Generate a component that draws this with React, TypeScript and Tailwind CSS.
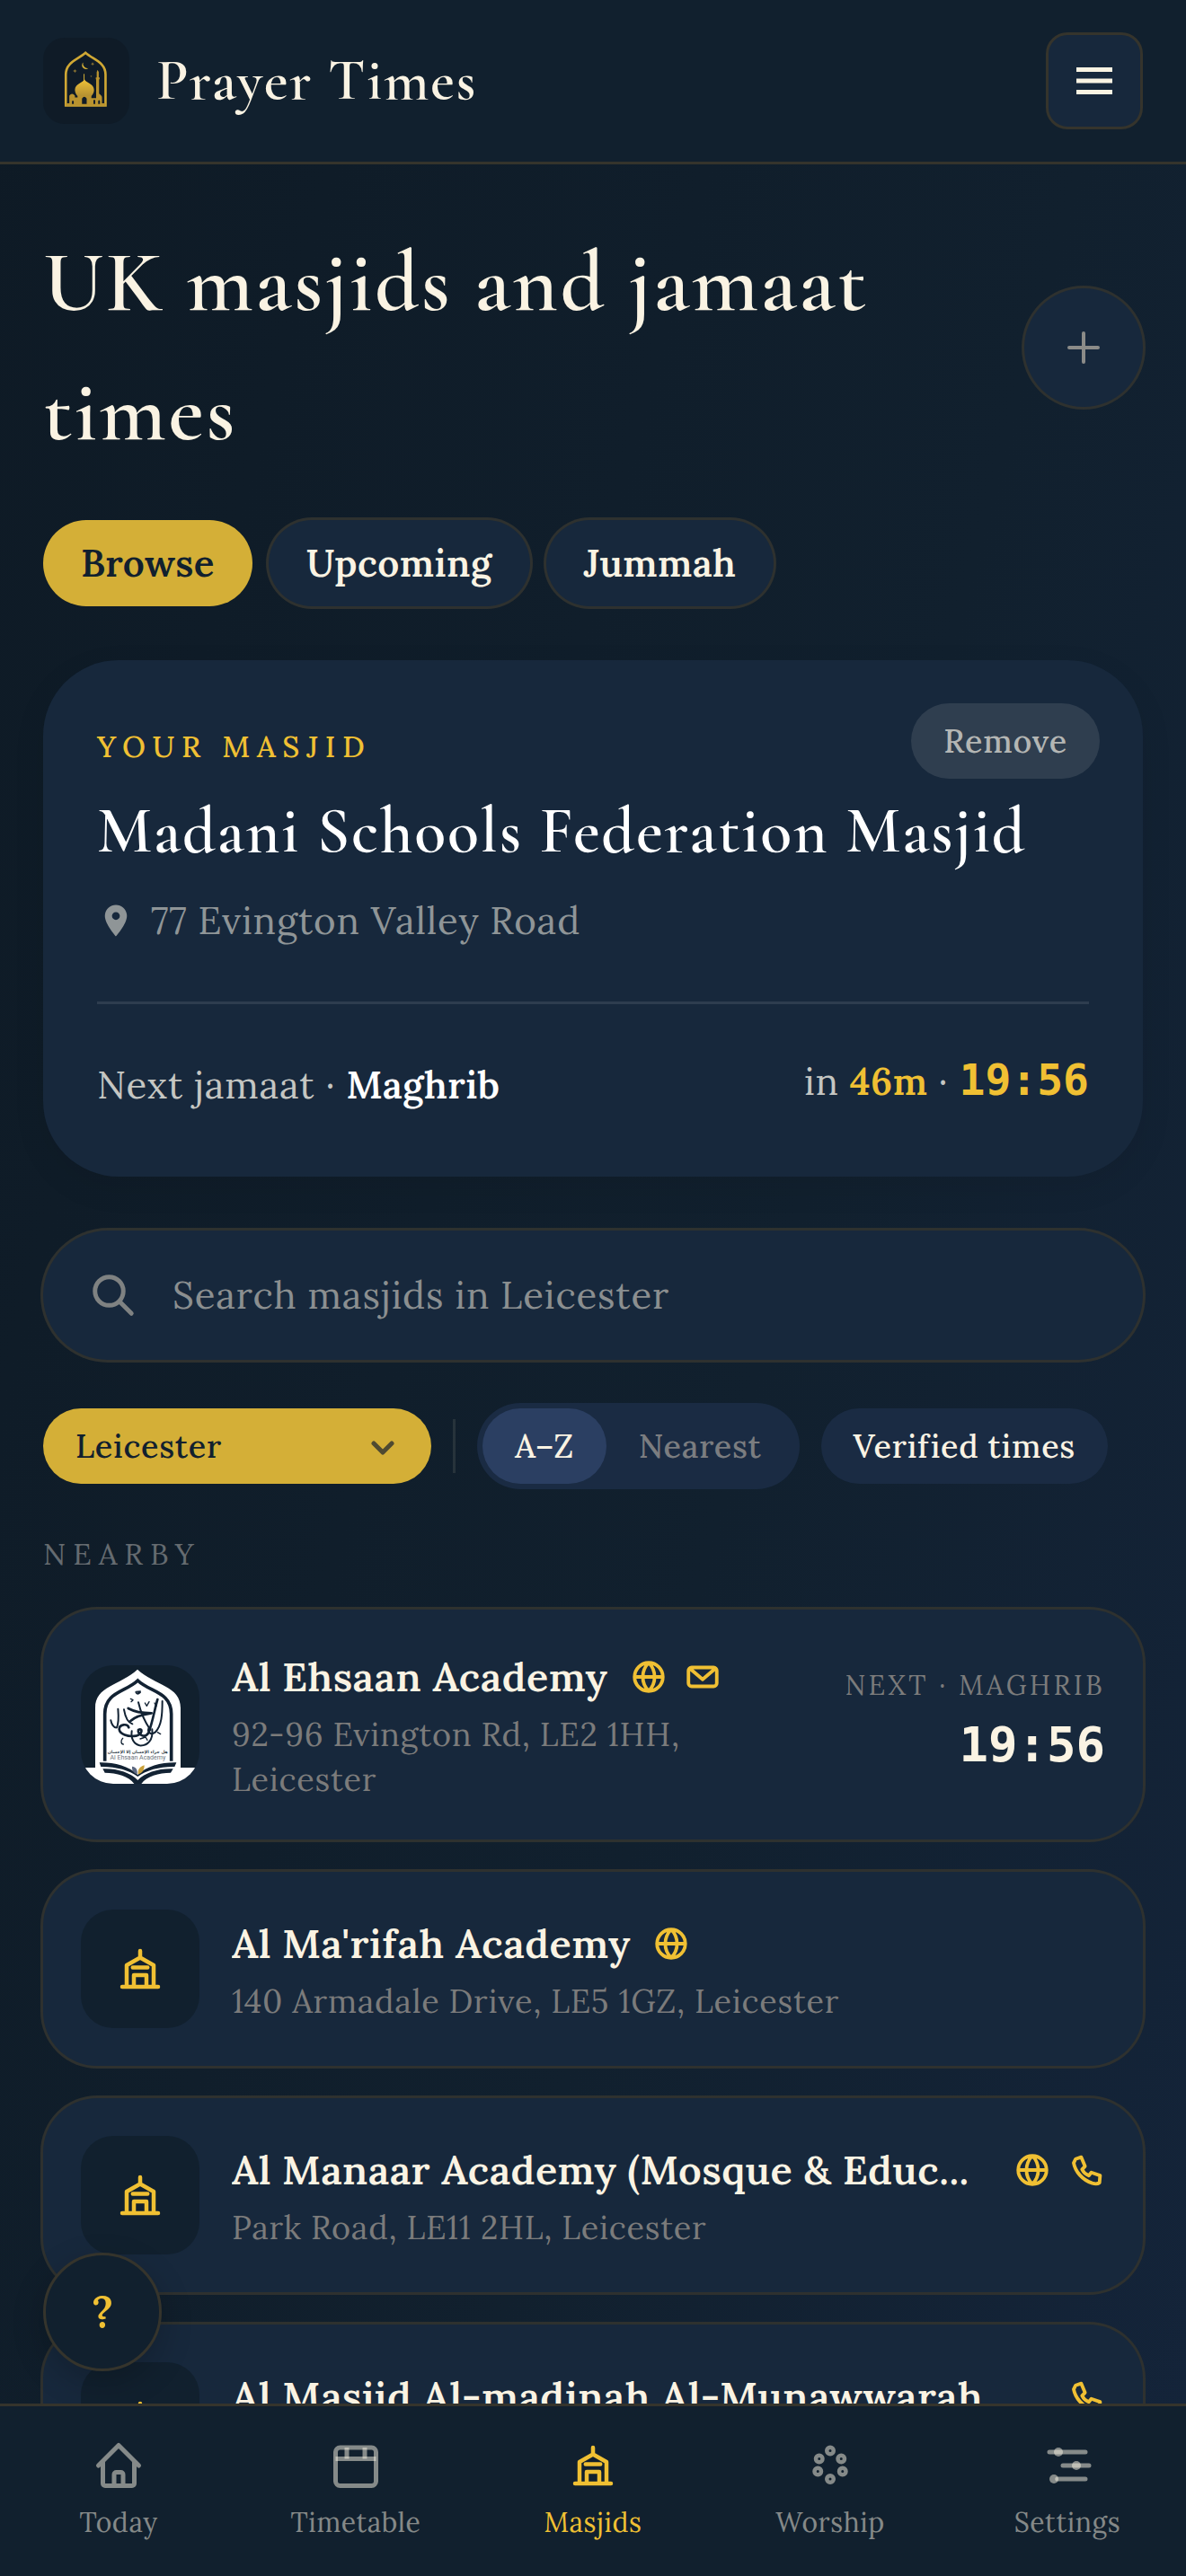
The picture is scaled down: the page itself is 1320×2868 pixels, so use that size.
import type { ReactNode } from "react";

const serif = "font-['Lora','Liberation_Serif',serif]";
const display = "font-['Cormorant_Garamond','Liberation_Serif',serif] font-semibold tracking-wide";
const mono = "font-['DejaVu_Sans_Mono',monospace] tracking-normal";
const body = "tracking-[0.02em]";
const strong = "font-semibold tracking-[0.01em]";
const ring = "ring-[3px] ring-[#2e312f]";

function AppLogo() {
  return (
    <svg viewBox="51 35 293 293" className="size-24" aria-hidden="true">
      <defs>
        <linearGradient id="gold" x1="0" y1="0" x2="0" y2="1">
          <stop offset="0" stopColor="#f0c238" />
          <stop offset="1" stopColor="#b38f31" />
        </linearGradient>
      </defs>
      <path d="M128 265V160C128 118 168 110 195 86C222 110 263 118 263 160V265Z" fill="none" stroke="#d0a834" strokeWidth="8" />
      <path d="M187 119a13 13 0 1 0 18 19a15 15 0 0 1-18-19z" fill="#d4af37" />
      <path d="M219 118l2 4 4 2-4 2-2 4-2-4-4-2 4-2zM159 142l2 4 5 2-5 2-2 5-2-5-5-2 5-2zM214 163l1 2 3 1-3 1-1 3-1-3-3-1 3-1z" fill="#8d7532" />
      <path d="M190 158v25" stroke="#d4af37" strokeWidth="3" />
      <path d="M191 176C188 188 159 190 159 212C159 222 164 230 169 234H214C220 229 224 221 224 212C224 190 195 188 191 176Z" fill="url(#gold)" />
      <path d="M128 266V258H140V232Q149 220 159 232V238H168V232H215V240H231V176H230V170H233V152L236 144L240 152V170H243V176H241V225Q252 232 251 240V258H263V266Z" fill="#b9932f" />
      <path d="M183 260v-18q8-13 16 0v18zM149 260v-9q3-5 6 0v9zM222 260v-12q3-5 6 0v12zM238 260v-10q3-5 6 0v10z" fill="#111c28" />
    </svg>
  );
}

function AcademyLogo() {
  return (
    <svg viewBox="30 42 396 396" className="size-full" role="img" aria-label="Al Ehsaan Academy logo">
      <path d="M30 384H78V185C78 110 160 110 219 56C278 110 363 110 363 185V384H426V438H30Z" fill="#fff" />
      <path d="M110 362V205C110 130 180 132 220 93C260 132 332 130 332 205V362" fill="none" stroke="#122233" strokeWidth="11" />
      <g fill="none" stroke="#122233" strokeLinecap="round" strokeLinejoin="round">
        <path strokeWidth="8" d="M286 156C276 190 270 230 256 268C242 290 218 270 222 258C238 250 236 272 214 278C186 282 160 272 158 256C158 238 186 236 190 250" />
        <path strokeWidth="6" d="M302 162C302 205 300 245 278 266C262 278 250 262 258 250M154 188C156 212 158 232 150 250C140 252 132 238 130 226" />
        <path strokeWidth="6" d="M222 166C230 200 244 232 262 258M174 190C178 214 184 232 202 238" />
        <path strokeWidth="8" d="M188 186C206 196 240 202 266 202C240 206 208 216 196 228" />
        <path strokeWidth="6" d="M200 262C196 288 208 306 226 310C254 312 272 290 268 256" />
        <path strokeWidth="4" d="M196 154l8 4-6 6M244 168l6 10 8-14M276 168l6 10M170 286c-8 8-6 20 2 20M286 266l10 6M228 288l18-6 6 10" />
        <path strokeWidth="6" d="M214 132q4 10 14 0" />
      </g>
      <path d="M213 128l18-1-7 10z" fill="#122233" />
      <text x="220" y="336" textAnchor="middle" fontSize="14" fontWeight="700" fill="#333f4c" fontFamily="DejaVu Sans, sans-serif" direction="rtl">هل جزاء الإحسان إلا الإحسان</text>
      <text x="220" y="356" textAnchor="middle" fontSize="21" fill="#6d757d" fontFamily="Roboto, sans-serif">Al Ehsaan Academy</text>
      <path d="M92 367C140 366 190 378 220 408C250 378 300 366 349 367L343 381C295 380 250 392 220 414C190 392 145 380 97 381Z" fill="#122233" />
      <path d="M103 388C150 386 195 400 220 426C245 400 290 386 338 388L330 401C290 402 250 412 232 438H208C190 412 150 402 110 401Z" fill="#122233" />
      <path d="M201 380C215 382 220 392 218 406C206 402 200 394 201 380Z" fill="#5c6880" />
      <path d="M242 376C224 382 220 392 221 406C236 402 242 392 242 376Z" fill="#caa13a" />
    </svg>
  );
}

function MosqueIcon() {
  return (
    <svg viewBox="0 0 24 24" className="size-15" fill="none" stroke="currentColor" strokeWidth="1.8" strokeLinecap="round" strokeLinejoin="round" aria-hidden="true">
      <path d="M4 20h16M6 20V10.4L12 7l6 3.4V20M12 7V4M8.7 11.4h6.6M9.2 20v-5.2h5.6V20" />
    </svg>
  );
}

function HomeIcon() {
  return (
    <svg viewBox="0 0 24 24" className="size-15" fill="none" stroke="currentColor" strokeWidth="2" strokeLinecap="round" strokeLinejoin="round" aria-hidden="true">
      <path d="M3 12l9-9 9 9M5 10v10a1 1 0 0 0 1 1h12a1 1 0 0 0 1-1V10M10 21v-5a1 1 0 0 1 1-1h2a1 1 0 0 1 1 1v5" />
    </svg>
  );
}

function TimetableIcon() {
  return (
    <svg viewBox="0 0 24 24" className="size-15" fill="none" stroke="currentColor" strokeWidth="2" aria-hidden="true">
      <rect x="3" y="4" width="18" height="17" rx="2" />
      <path d="M3 9h18" />
      <path d="M8 4v5M16 4v5" />
    </svg>
  );
}

function WorshipIcon() {
  const beads = [[12, 5.4], [7.1, 9], [16.9, 9], [6.5, 14.6], [17.5, 14.6], [12, 18]];
  return (
    <svg viewBox="0 0 24 24" className="size-15" fill="none" stroke="currentColor" strokeWidth="1.8" aria-hidden="true">
      {beads.map(([x, y]) => (
        <circle key={`${x}-${y}`} cx={x} cy={y} r="1.5" />
      ))}
    </svg>
  );
}

function SettingsIcon() {
  return (
    <svg viewBox="0 0 24 24" className="size-15" fill="none" stroke="currentColor" strokeWidth="2" strokeLinecap="round" aria-hidden="true">
      <path d="M4 6h16M10 12h11.6M7.5 18H20" />
      <circle cx="8" cy="6" r="2" fill="currentColor" stroke="none" />
      <circle cx="16" cy="12" r="2" fill="currentColor" stroke="none" />
      <circle cx="6" cy="18" r="2" fill="currentColor" stroke="none" />
    </svg>
  );
}

type Contact = "web" | "mail" | "phone";

const contactLabel: Record<Contact, string> = { web: "Website", mail: "Email", phone: "Phone" };

function ContactIcon({ kind }: { kind: Contact }) {
  return (
    <svg viewBox="0 0 24 24" className="size-[42px]" fill="none" stroke="currentColor" strokeWidth="2.2" strokeLinecap="round" strokeLinejoin="round" aria-hidden="true">
      {kind === "web" && <path d="M21 12a9 9 0 1 1-18 0 9 9 0 0 1 18 0zM3 12h18M12 3c-5 5-5 13 0 18M12 3c5 5 5 13 0 18" />}
      {kind === "mail" && <path d="M5 6h14a2 2 0 0 1 2 2v8a2 2 0 0 1-2 2H5a2 2 0 0 1-2-2V8a2 2 0 0 1 2-2zM3.8 6.600l8.200 7 8.200-7" />}
      {kind === "phone" && (
        <path d="M4 7.500L5.200 5 8.800 3.800 11.200 9.600 9.300 11.600C10.200 13.500 11.600 14.800 13.600 15.600L15.200 13.600 20.800 15.500 20.400 20.100C19.300 20.900 17.600 20.900 15.800 20.400C9.500 18.300 5 13 4 7.500z" />
      )}
    </svg>
  );
}

type Masjid = {
  name: string;
  address: string;
  contacts: Contact[];
  logo?: boolean;
  next?: { label: string; time: string };
  spread?: boolean;
};

const masjids: Masjid[] = [
  {
    name: "Al Ehsaan Academy",
    address: "92-96 Evington Rd, LE2 1HH, Leicester",
    contacts: ["web", "mail"],
    logo: true,
    next: { label: "NEXT · MAGHRIB", time: "19:56" },
  },
  { name: "Al Ma'rifah Academy", address: "140 Armadale Drive, LE5 1GZ, Leicester", contacts: ["web"] },
  {
    name: "Al Manaar Academy (Mosque & Educ...",
    address: "Park Road, LE11 2HL, Leicester",
    contacts: ["web", "phone"],
    spread: true,
  },
  { name: "Al Masjid Al-madinah Al-Munawwarah", address: "Leicester", contacts: ["phone"], spread: true },
];

function MasjidCard({ masjid }: { masjid: Masjid }) {
  return (
    <li className={`flex items-center gap-9 rounded-[60px] bg-[#17283c] p-[42px] ${ring}`}>
      <div className="flex size-[132px] shrink-0 items-center justify-center overflow-hidden rounded-[36px] bg-[#11202e] text-[#f0c033]">
        {masjid.logo ? <AcademyLogo /> : <MosqueIcon />}
      </div>
      <div className="min-w-0 flex-1">
        <div className={masjid.spread ? "flex items-center justify-between gap-6" : "flex items-center gap-6"}>
          <h3 className={`truncate text-[45px] leading-[66px] text-[#faf3e3] ${strong}`}>{masjid.name}</h3>
          <div className="flex shrink-0 gap-[18px] text-[#f0c033]">
            {masjid.contacts.map((kind) => (
              <a key={kind} href="#contact" aria-label={`${contactLabel[kind]}: ${masjid.name}`}>
                <ContactIcon kind={kind} />
              </a>
            ))}
          </div>
        </div>
        <p className={`mt-1.5 text-[36px] leading-[50px] text-[#7b7b7b] ${body}`}>{masjid.address}</p>
      </div>
      {masjid.next && (
        <div className="flex w-[330px] shrink-0 flex-col items-end pb-1.5">
          <span className="text-[30px] leading-[42px] tracking-[0.11em] whitespace-nowrap text-[#7b7b7b]">{masjid.next.label}</span>
          <span className={`mt-2.5 text-[54px] leading-[72px] font-bold text-[#faf3e3] ${mono}`}>{masjid.next.time}</span>
        </div>
      )}
    </li>
  );
}

const tabs: { label: string; icon: ReactNode; active?: boolean }[] = [
  { label: "Today", icon: <HomeIcon /> },
  { label: "Timetable", icon: <TimetableIcon /> },
  { label: "Masjids", icon: <MosqueIcon />, active: true },
  { label: "Worship", icon: <WorshipIcon /> },
  { label: "Settings", icon: <SettingsIcon /> },
];

export default function App() {
  return (
    <div className={`min-h-screen bg-linear-105 from-[#0e1a25] via-[#11202e] via-60% to-[#14243a] text-[#faf3e3] ${serif}`}>
      <header className="sticky top-0 z-10 flex items-center justify-between border-b-[3px] border-[#35342c] bg-[#11202e] px-12 py-9">
        <div className="flex items-center gap-[30px]">
          <div className="overflow-hidden rounded-[24px] bg-[#0f1b27]">
            <AppLogo />
          </div>
          <span className={`text-[65px] leading-[96px] ${display}`}>Prayer Times</span>
        </div>
        <button type="button" aria-label="Menu" className="flex size-[108px] items-center justify-center rounded-[24px] border-[3px] border-[#35342c] bg-[#17283c]">
          <svg viewBox="0 0 40 30" className="w-10" aria-hidden="true">
            <path d="M0 2.500h40M0 15h40M0 27.500h40" stroke="#faf3e3" strokeWidth="5" />
          </svg>
        </button>
      </header>

      <main className="px-12 pt-[60px] pb-12">
        <div className="flex items-center justify-between gap-12">
          <h1 className={`text-[96px] leading-[144px] ${display}`}>UK masjids and jamaat times</h1>
          <button type="button" aria-label="Add masjid" className={`flex size-[132px] shrink-0 items-center justify-center rounded-full bg-[#17283c] text-[#8b8b88] ${ring}`}>
            <svg viewBox="0 0 36 36" className="size-9" aria-hidden="true">
              <path d="M18 2v32M2 18h32" stroke="currentColor" strokeWidth="4" strokeLinecap="round" />
            </svg>
          </button>
        </div>

        <div className={`mt-12 flex gap-[18px] text-[42px] leading-[96px] ${strong}`} role="group" aria-label="View">
          <button type="button" className="rounded-full bg-[#d4af37] px-[42px] text-[#11202e]">Browse</button>
          <button type="button" className={`rounded-full bg-[#17283c] px-[42px] ${ring}`}>Upcoming</button>
          <button type="button" className={`rounded-full bg-[#17283c] px-[42px] ${ring}`}>Jummah</button>
        </div>

        <section className="relative mt-[60px] rounded-[84px] bg-[#17283c] p-[60px] shadow-[0_12px_36px_rgba(0,0,0,0.08)]" aria-label="Your masjid">
          <button type="button" className={`absolute top-12 right-12 rounded-full bg-[#2f3e4f] px-9 text-[36px] leading-[84px] font-medium text-[#b4b6b4] ${body}`}>Remove</button>
          <p className="mt-1.5 text-[33px] leading-[60px] font-medium tracking-[0.23em] text-[#f0c033]">YOUR MASJID</p>
          <h2 className={`mt-4 text-[72px] leading-[96px] text-white ${display}`}>Madani Schools Federation Masjid</h2>
          <p className={`mt-4 flex items-center gap-[18px] text-[42px] leading-[72px] text-[#8f9597] ${body}`}>
            <svg viewBox="0 0 24 24" className="size-[42px]" fill="currentColor" aria-hidden="true">
              <path d="M12 2C8.13 2 5 5.13 5 9c0 5.250 7 13 7 13s7-7.750 7-13c0-3.870-3.130-7-7-7zm0 9.500a2.500 2.500 0 0 1 0-5 2.500 2.500 0 0 1 0 5z" />
            </svg>
            77 Evington Valley Road
          </p>
          <div className={`mt-[54px] flex items-start justify-between border-t-[3px] border-[#2e3d4f] pt-12 text-[42px] text-[#c5c6c2] ${body}`}>
            <p className="leading-[84px]">
              Next jamaat · <strong className={`text-white ${strong}`}>Maghrib</strong>
            </p>
            <p className="leading-[72px]">
              in <strong className={`text-[#f0c033] ${strong}`}>46m</strong> · <strong className={`text-[48px] text-[#f0c033] ${mono}`}>19:56</strong>
            </p>
          </div>
        </section>

        <label className={`mt-[60px] flex h-36 items-center gap-[39px] rounded-full bg-[#17283c] px-[51px] ${ring}`}>
          <svg viewBox="0 0 24 24" className="size-[54px] shrink-0 text-[#7f8282]" fill="none" stroke="currentColor" strokeWidth="2.2" strokeLinecap="round" strokeLinejoin="round" aria-hidden="true">
            <path d="M21 21l-6-6m2-5a7 7 0 1 1-14 0 7 7 0 0 1 14 0z" />
          </svg>
          <input type="search" aria-label="Search masjids" placeholder="Search masjids in Leicester" className={`min-w-0 flex-1 bg-transparent text-[42px] outline-none placeholder:text-[#8b8f90] ${body}`} />
        </label>

        <div className={`mt-12 flex items-center gap-6 text-[36px] leading-[84px] font-medium ${body}`}>
          <div className="relative w-[432px] text-[#11202e]">
            <select aria-label="City" className={`h-[84px] w-full appearance-none rounded-full bg-[#d4af37] pr-20 pl-9 leading-[60px] ${body}`}>
              <option>Leicester</option>
            </select>
            <svg viewBox="0 0 26 16" className="pointer-events-none absolute top-9 right-[41px] w-[26px]" fill="none" stroke="#4f4a31" strokeWidth="5" strokeLinecap="round" strokeLinejoin="round" aria-hidden="true">
              <path d="M3 3l10 10L23 3" />
            </svg>
          </div>
          <div className="h-15 w-[3px] bg-[#27333b]" />
          <div className="flex rounded-full bg-[#1a2b43] p-1.5" role="group" aria-label="Sort">
            <button type="button" className="rounded-full bg-[#2b3f62] px-9">A–Z</button>
            <button type="button" className="rounded-full px-9 text-[#7b7d80]">Nearest</button>
          </div>
          <button type="button" className="rounded-full bg-[#1a2b43] px-9 whitespace-nowrap">Verified times</button>
        </div>

        <h2 className="mt-12 text-[33px] leading-[48px] tracking-[8px] text-[#656b70]">NEARBY</h2>
        <ul className="mt-[38px] flex flex-col gap-9">
          {masjids.map((masjid) => (
            <MasjidCard key={masjid.name} masjid={masjid} />
          ))}
        </ul>
      </main>

      <button type="button" aria-label="Help" className="fixed bottom-[228px] left-12 z-10 size-[132px] rounded-full border-[3px] border-[#35342c] bg-[#11202e] text-[48px] font-semibold text-[#f0c033] shadow-[0_12px_36px_rgba(0,0,0,0.2)]">
        ?
      </button>

      <nav className="fixed inset-x-0 bottom-0 z-10 grid h-48 grid-cols-5 border-t-[3px] border-[#35342c] bg-[#11202e] pt-9" aria-label="Main">
        {tabs.map((tab) => (
          <a
            key={tab.label}
            href={`#${tab.label.toLowerCase()}`}
            className={tab.active ? "flex flex-col items-center gap-1.5 text-[#f0c033]" : "flex flex-col items-center gap-1.5 text-[#faf3e3]/50"}
          >
            {tab.icon}
            <span className={`text-[30px] leading-[54px] ${body}`}>{tab.label}</span>
          </a>
        ))}
      </nav>
    </div>
  );
}
